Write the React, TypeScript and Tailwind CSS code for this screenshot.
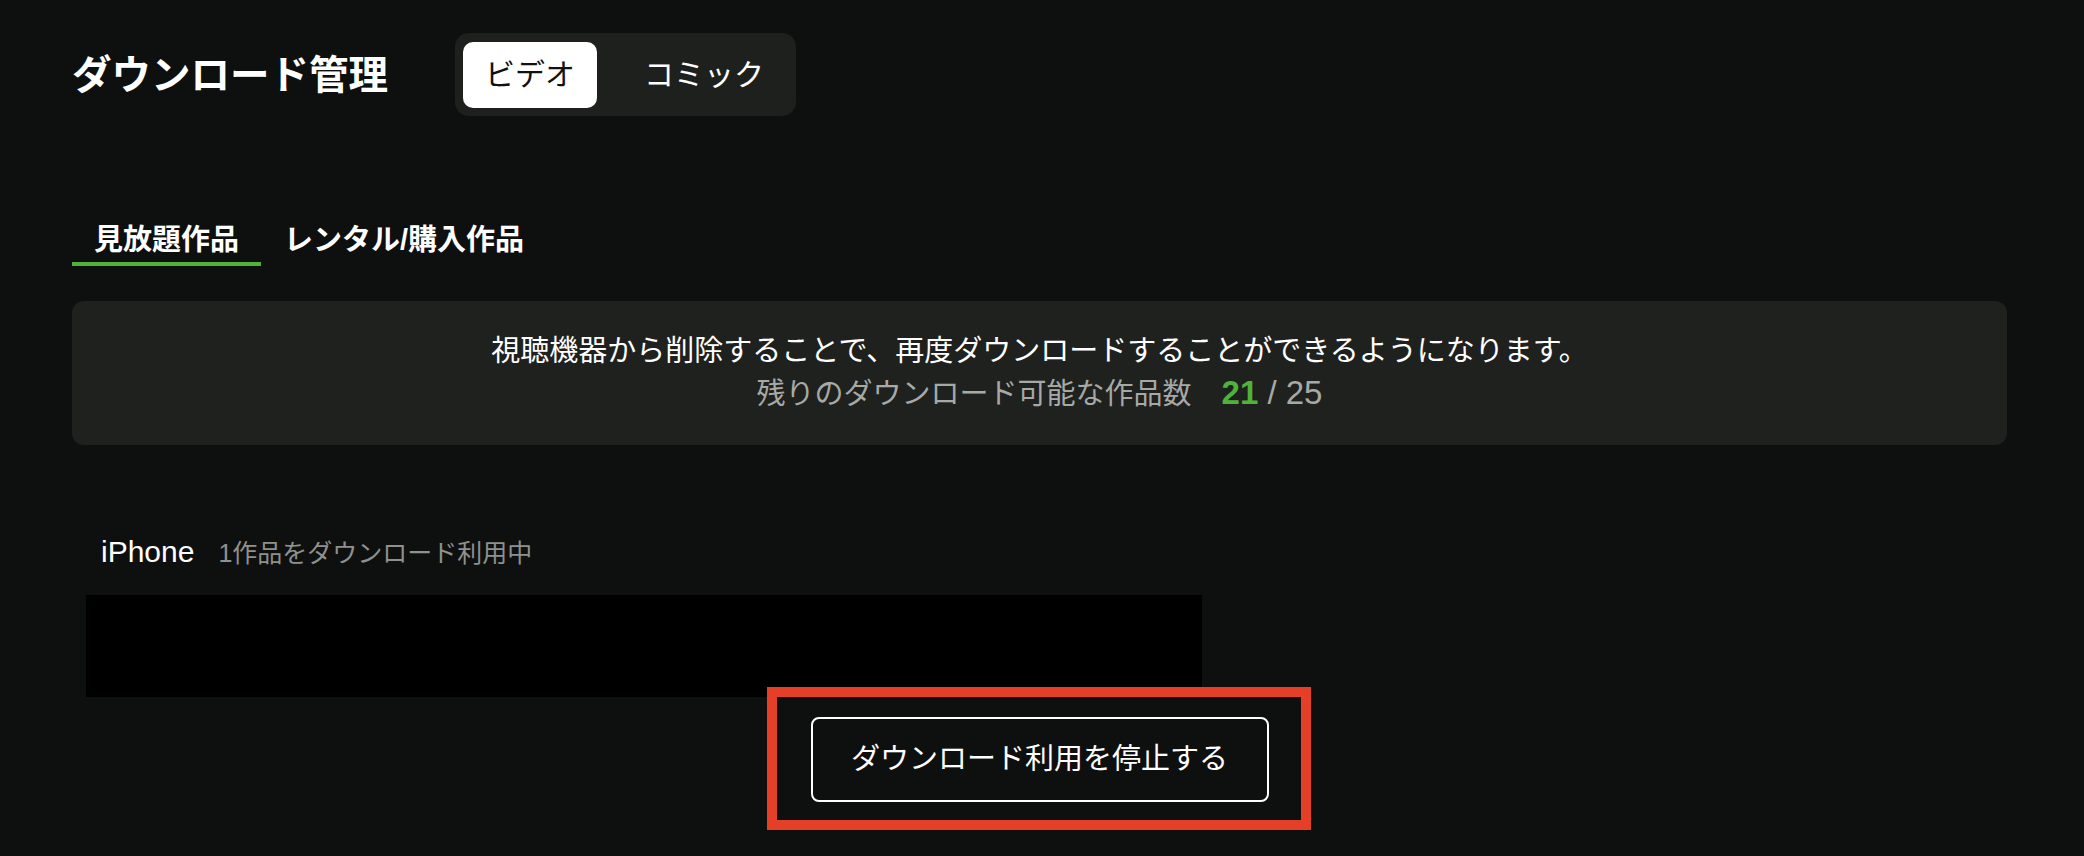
import React from "react";

const font = { fontFamily: '"Liberation Sans", "Noto Sans CJK JP", sans-serif' };

export default function App() {
  return (
    <main style={font} className="min-h-[856px] w-full bg-[#0e100f] pl-[72px] pr-[77px] pt-[33px] text-white">
      <header className="flex items-center">
        <h1 className="text-[39.5px] font-bold leading-[48px] text-white">ダウンロード管理</h1>
        <div className="ml-[67px] flex h-[83px] items-center gap-[25px] rounded-[14px] bg-[#1e201e] px-[8px]">
          <button
            type="button"
            className="flex h-[66px] items-center rounded-[10px] bg-white px-[22px] text-[30px] leading-none text-[#111]"
          >
            ビデオ
          </button>
          <button type="button" className="flex h-[66px] items-center pl-[22px] pr-[24px] text-[30px] leading-none text-white">
            コミック
          </button>
        </div>
      </header>

      <nav className="mt-[104px] flex">
        <div className="border-b-4 border-[#4fb33a] px-[22px] pb-[2px] text-[29px] font-bold leading-[40px]">見放題作品</div>
        <div className="border-b-4 border-transparent px-[23px] pb-[2px] text-[29px] font-bold leading-[40px]">レンタル/購入作品</div>
      </nav>

      <section className="mt-[35px] flex flex-col items-center rounded-[12px] bg-[#1f211f] py-[29px] text-[29px] leading-[43px]">
        <p className="text-white">視聴機器から削除することで、再度ダウンロードすることができるようになります。</p>
        <p className="h-[43px] text-[#a6a9a6]">
          残りのダウンロード可能な作品数
          <span className="ml-[30px] text-[33px] font-bold leading-none text-[#4fb33a]">21</span>
          <span className="text-[33px] leading-none"> / 25</span>
        </p>
      </section>

      <section className="mt-[87px]">
        <div className="ml-[29px] flex items-baseline gap-[24px] leading-[40px]">
          <span className="text-[30px] text-white">iPhone</span>
          <span className="text-[25px] text-[#8e918e]">1作品をダウンロード利用中</span>
        </div>
        <div className="ml-[14px] mt-[22px] h-[102px] w-[1116px] bg-black" />
        <div className="mt-[20px] flex justify-center">
          <div className="relative">
            <button
              type="button"
              className="flex h-[85px] w-[458px] items-center justify-center rounded-[8px] border-2 border-white text-[29px] text-white"
            >
              ダウンロード利用を停止する
            </button>
            <div className="pointer-events-none absolute -bottom-[28px] -left-[44px] -right-[42px] -top-[30px] border-[10px] border-[#e63f28]" />
          </div>
        </div>
      </section>
    </main>
  );
}
